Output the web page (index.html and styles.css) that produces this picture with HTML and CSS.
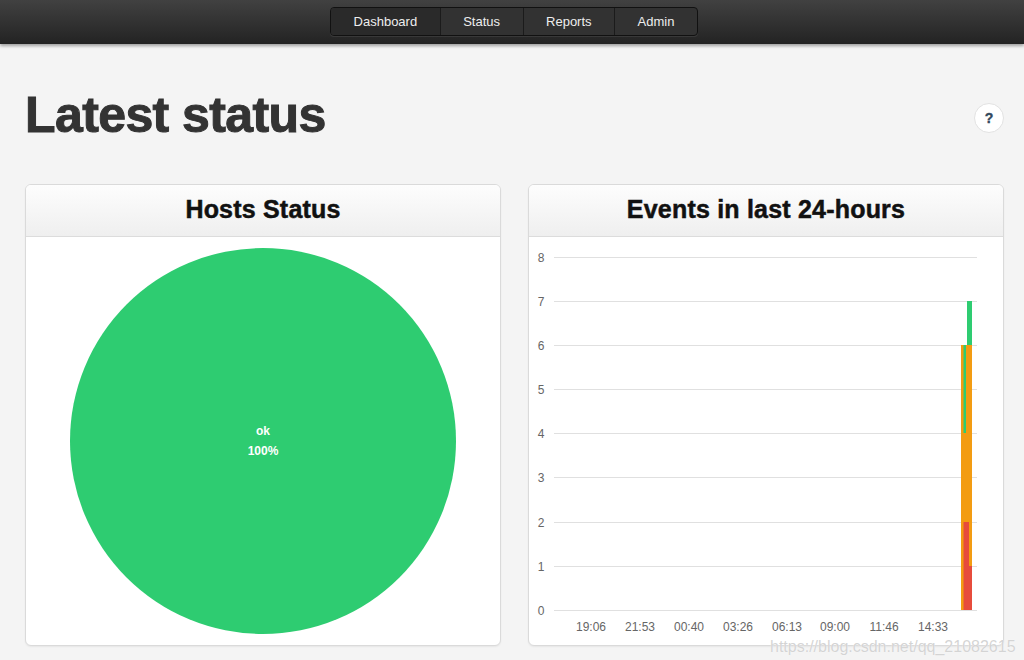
FILE: index.html
```html
<!DOCTYPE html>
<html>
<head>
<meta charset="utf-8">
<title>Latest status</title>
<link rel="stylesheet" href="styles.css">
</head>
<body>
<header class="navbar">
  <nav class="nav-group">
    <a class="nav-item active">Dashboard</a>
    <a class="nav-item">Status</a>
    <a class="nav-item">Reports</a>
    <a class="nav-item">Admin</a>
  </nav>
</header>
<main class="page">
  <div class="title-row">
    <h1 class="page-title">Latest status</h1>
    <button class="help-btn">?</button>
  </div>
  <div class="panels">
    <section class="panel">
      <div class="panel-header">Hosts Status</div>
      <div class="panel-body">
        <svg class="chart" width="474" height="408" viewBox="0 0 474 408">
          <circle cx="237" cy="204" r="193" fill="#2ecc71"/>
          <text class="pie-label" x="237" y="198" text-anchor="middle">ok</text>
          <text class="pie-label" x="237" y="218" text-anchor="middle">100%</text>
        </svg>
      </div>
    </section>
    <section class="panel">
      <div class="panel-header">Events in last 24-hours</div>
      <div class="panel-body">
        <svg class="chart" width="474" height="408" viewBox="0 0 474 408">
          <g class="grid">
            <line x1="25" x2="448" y1="20.5" y2="20.5"/>
            <line x1="25" x2="448" y1="64.5" y2="64.5"/>
            <line x1="25" x2="448" y1="108.5" y2="108.5"/>
            <line x1="25" x2="448" y1="152.5" y2="152.5"/>
            <line x1="25" x2="448" y1="196.5" y2="196.5"/>
            <line x1="25" x2="448" y1="240.5" y2="240.5"/>
            <line x1="25" x2="448" y1="285.5" y2="285.5"/>
            <line x1="25" x2="448" y1="329.5" y2="329.5"/>
            <line x1="25" x2="448" y1="373.5" y2="373.5"/>
          </g>
          <g class="axis" text-anchor="middle">
            <text x="12" y="25">8</text>
            <text x="12" y="69">7</text>
            <text x="12" y="113">6</text>
            <text x="12" y="157">5</text>
            <text x="12" y="201">4</text>
            <text x="12" y="245">3</text>
            <text x="12" y="290">2</text>
            <text x="12" y="334">1</text>
            <text x="12" y="378">0</text>
            <text x="62" y="394">19:06</text>
            <text x="111" y="394">21:53</text>
            <text x="160" y="394">00:40</text>
            <text x="209" y="394">03:26</text>
            <text x="258" y="394">06:13</text>
            <text x="306" y="394">09:00</text>
            <text x="355" y="394">11:46</text>
            <text x="404" y="394">14:33</text>
          </g>
          <rect x="432" y="108" width="11" height="265" fill="#f39c12"/>
          <rect x="438" y="64" width="5" height="44" fill="#2ecc71"/>
          <rect x="434.5" y="108" width="2.5" height="88" fill="#2ecc71"/>
          <rect x="434.5" y="285" width="5.5" height="88" fill="#e74c3c"/>
          <rect x="440" y="329" width="3" height="44" fill="#e74c3c"/>
        </svg>
      </div>
    </section>
  </div>
</main>
<div class="watermark">https://blog.csdn.net/qq_21082615</div>
</body>
</html>
```
FILE: styles.css
```css
html, body {
  margin: 0;
  padding: 0;
}
body {
  background: #f4f4f4;
  font-family: "Liberation Sans", Arial, sans-serif;
  color: #333;
  height: 660px;
  overflow: hidden;
  position: relative;
}
.navbar {
  height: 44px;
  background: linear-gradient(#414141, #232323);
  box-shadow: 0 2px 3px rgba(0, 0, 0, 0.35);
  display: flex;
  justify-content: center;
  align-items: flex-start;
  padding-left: 4px;
  box-sizing: border-box;
}
.nav-group {
  margin-top: 7px;
  display: flex;
  height: 27px;
  border: 1px solid #111;
  border-radius: 4px;
  overflow: hidden;
  background: #323232;
  box-shadow: 0 1px 0 rgba(255, 255, 255, 0.08);
}
.nav-item {
  display: flex;
  align-items: center;
  padding: 0 22.5px 1px;
  font-size: 13px;
  color: #eee;
  border-left: 1px solid #1b1b1b;
  cursor: pointer;
}
.nav-item:first-child {
  border-left: none;
}
.nav-item.active {
  background: #2a2a2a;
}
.page {
  padding: 0 20px 0 25px;
}
.title-row {
  display: flex;
  justify-content: space-between;
  align-items: center;
  margin-top: 41px;
}
.page-title {
  margin: 0;
  font-size: 50px;
  line-height: 60px;
  font-weight: bold;
  color: #333;
  letter-spacing: -0.6px;
  -webkit-text-stroke: 1px #333;
}
.help-btn {
  width: 30px;
  height: 30px;
  margin-top: 6px;
  border-radius: 50%;
  border: 1px solid #e2e2e2;
  background: #fff;
  color: #34495e;
  font-family: "Liberation Sans", Arial, sans-serif;
  font-weight: bold;
  font-size: 14px;
  -webkit-text-stroke: 0.4px #34495e;
  padding: 0;
  cursor: pointer;
}
.panels {
  margin-top: 39px;
  display: grid;
  grid-template-columns: 1fr 1fr;
  column-gap: 27px;
}
.panel {
  background: #fff;
  border: 1px solid #dadada;
  border-radius: 6px;
  box-shadow: 0 1px 2px rgba(0, 0, 0, 0.06);
  overflow: hidden;
}
.panel-header {
  height: 49px;
  line-height: 49px;
  padding-bottom: 2px;
  text-align: center;
  font-size: 25px;
  font-weight: bold;
  color: #111;
  letter-spacing: 0.2px;
  -webkit-text-stroke: 0.5px #111;
  background: linear-gradient(#fdfdfd, #efefef);
  border-bottom: 1px solid #dcdcdc;
}
.panel-body {
  height: 408px;
}
.chart {
  display: block;
}
.pie-label {
  fill: #fff;
  font-family: "Liberation Sans", Arial, sans-serif;
  font-size: 12px;
  font-weight: bold;
}
.grid line {
  stroke: #e0e0e0;
  stroke-width: 1;
}
.axis text {
  fill: #666;
  font-family: "Liberation Sans", Arial, sans-serif;
  font-size: 12px;
}
.watermark {
  position: absolute;
  left: 770px;
  top: 638px;
  font-size: 16px;
  color: rgba(205, 205, 205, 0.85);
  text-shadow: 0 0 1px #fff;
  white-space: nowrap;
}
```
